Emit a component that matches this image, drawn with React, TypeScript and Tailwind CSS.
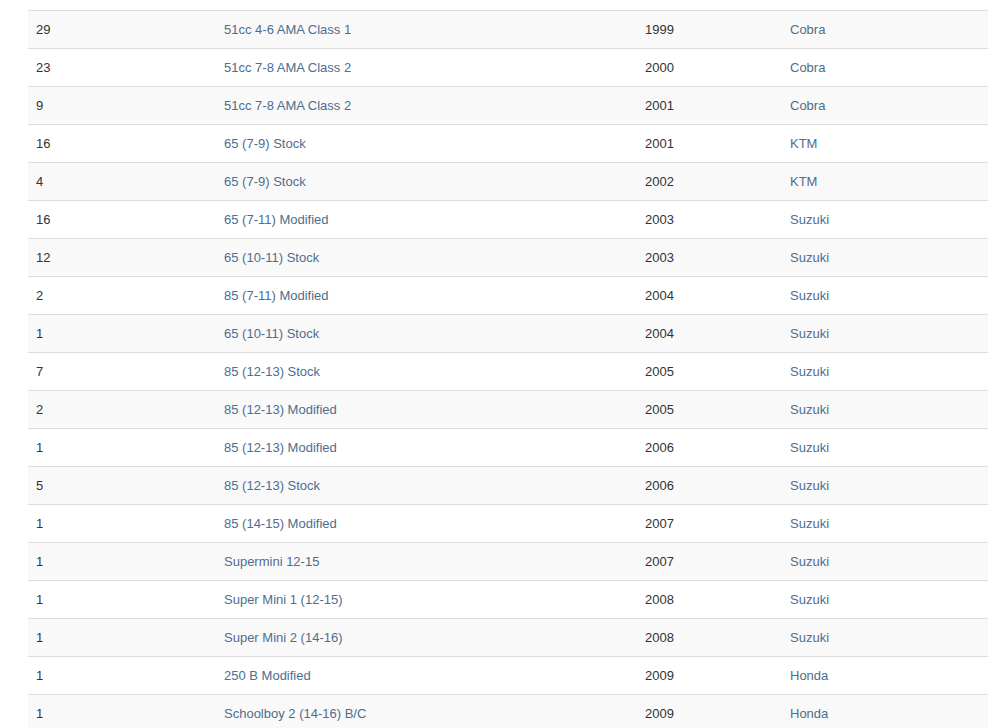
const rows: [string, string, string, string][] = [
  ["29", "51cc 4-6 AMA Class 1", "1999", "Cobra"],
  ["23", "51cc 7-8 AMA Class 2", "2000", "Cobra"],
  ["9", "51cc 7-8 AMA Class 2", "2001", "Cobra"],
  ["16", "65 (7-9) Stock", "2001", "KTM"],
  ["4", "65 (7-9) Stock", "2002", "KTM"],
  ["16", "65 (7-11) Modified", "2003", "Suzuki"],
  ["12", "65 (10-11) Stock", "2003", "Suzuki"],
  ["2", "85 (7-11) Modified", "2004", "Suzuki"],
  ["1", "65 (10-11) Stock", "2004", "Suzuki"],
  ["7", "85 (12-13) Stock", "2005", "Suzuki"],
  ["2", "85 (12-13) Modified", "2005", "Suzuki"],
  ["1", "85 (12-13) Modified", "2006", "Suzuki"],
  ["5", "85 (12-13) Stock", "2006", "Suzuki"],
  ["1", "85 (14-15) Modified", "2007", "Suzuki"],
  ["1", "Supermini 12-15", "2007", "Suzuki"],
  ["1", "Super Mini 1 (12-15)", "2008", "Suzuki"],
  ["1", "Super Mini 2 (14-16)", "2008", "Suzuki"],
  ["1", "250 B Modified", "2009", "Honda"],
  ["1", "Schoolboy 2 (14-16) B/C", "2009", "Honda"],
];

export default function App() {
  return (
    <div
      className="min-h-screen bg-white px-[28px] pt-[10px] text-[13px] text-[#333]"
      style={{ fontFamily: '"Liberation Sans", Arial, sans-serif' }}
    >
      <table className="w-[960px] table-fixed border-collapse">
        <colgroup>
          <col className="w-[188px]" />
          <col className="w-[421px]" />
          <col className="w-[145px]" />
          <col className="w-[206px]" />
        </colgroup>
        <tbody>
          {rows.map(([count, cls, year, make], i) => (
            <tr key={i} className={i % 2 === 0 ? "bg-[#f9f9f9]" : "bg-white"}>
              <td className="h-[38px] border-t border-[#ddd] px-2 align-middle leading-[21px]">{count}</td>
              <td className="h-[38px] border-t border-[#ddd] px-2 align-middle leading-[21px]">
                <a href="#" className="text-[#4f6d8f]">{cls}</a>
              </td>
              <td className="h-[38px] border-t border-[#ddd] px-2 align-middle leading-[21px]">{year}</td>
              <td className="h-[38px] border-t border-[#ddd] px-2 align-middle leading-[21px]">
                <a href="#" className="text-[#4f6d8f]">{make}</a>
              </td>
            </tr>
          ))}
        </tbody>
      </table>
    </div>
  );
}
